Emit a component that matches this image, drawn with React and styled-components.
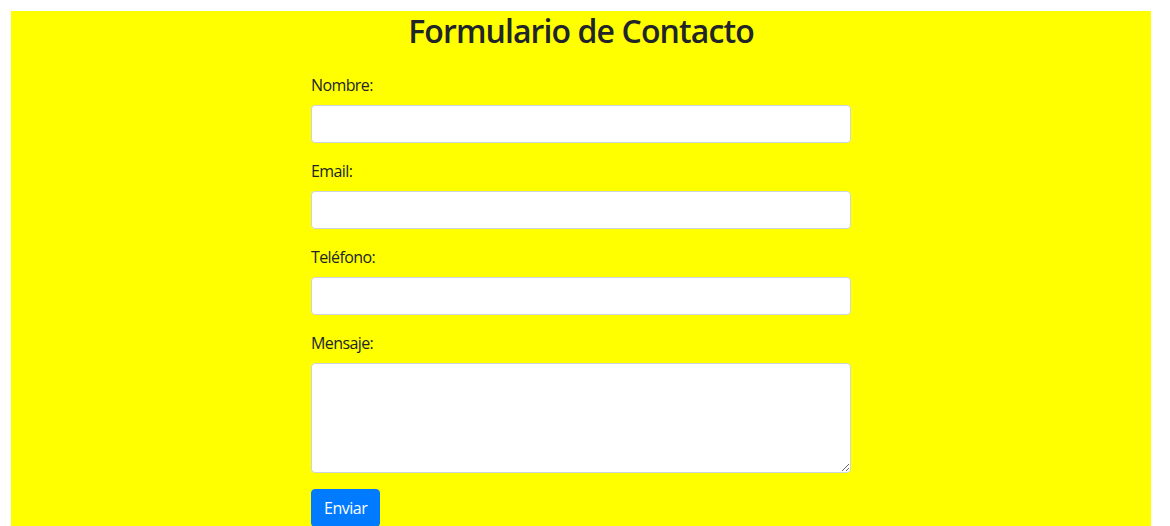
import React from "react";
import styled, { createGlobalStyle } from "styled-components";

const GlobalStyle = createGlobalStyle`
  *, *::before, *::after {
    box-sizing: border-box;
  }
  body {
    margin: 0;
    background: #fff;
    font-family: "Open Sans", "Liberation Sans", sans-serif;
    font-size: 16px;
    line-height: 1.5;
    color: #212529;
  }
`;

const Page = styled.div`
  width: 1140px;
  margin: 11px 0 0 11px;
  min-height: 515px;
  background: #ffff00;
`;

const Title = styled.h2`
  margin: 0 0 8px;
  padding-top: 1px;
  font-size: 32px;
  font-weight: 600;
  line-height: 1.2;
  letter-spacing: -0.9px;
  text-align: center;
  color: #212529;
`;

const Form = styled.form`
  width: 540px;
  margin: 0 auto;
  padding-top: 15px;
`;

const Group = styled.div`
  margin-bottom: 16px;
`;

const Label = styled.label`
  display: block;
  margin-bottom: 8px;
  font-size: 16px;
  line-height: 24px;
  letter-spacing: -0.6px;
`;

const Input = styled.input`
  display: block;
  width: 100%;
  height: 38px;
  padding: 6px 12px;
  font: inherit;
  color: #495057;
  background: #fff;
  border: 1px solid #ced4da;
  border-radius: 4px;
  outline: none;
`;

const TextArea = styled.textarea`
  display: block;
  width: 100%;
  height: 110px;
  padding: 6px 12px;
  font: inherit;
  color: #495057;
  background: #fff;
  border: 1px solid #ced4da;
  border-radius: 4px;
  outline: none;
  resize: vertical;
`;

const Button = styled.button`
  display: inline-block;
  padding: 6px 12px;
  font: inherit;
  line-height: 24px;
  letter-spacing: -0.5px;
  color: #fff;
  background: #007bff;
  border: 1px solid #007bff;
  border-radius: 4px;
  cursor: pointer;
`;

export default function App() {
  return (
    <>
      <GlobalStyle />
      <Page>
        <Title>Formulario de Contacto</Title>
        <Form onSubmit={(e) => e.preventDefault()}>
          <Group>
            <Label htmlFor="nombre">Nombre:</Label>
            <Input id="nombre" type="text" />
          </Group>
          <Group>
            <Label htmlFor="email">Email:</Label>
            <Input id="email" type="email" />
          </Group>
          <Group>
            <Label htmlFor="telefono">Teléfono:</Label>
            <Input id="telefono" type="tel" />
          </Group>
          <Group>
            <Label htmlFor="mensaje">Mensaje:</Label>
            <TextArea id="mensaje" rows={4} />
          </Group>
          <Button type="submit">Enviar</Button>
        </Form>
      </Page>
    </>
  );
}
